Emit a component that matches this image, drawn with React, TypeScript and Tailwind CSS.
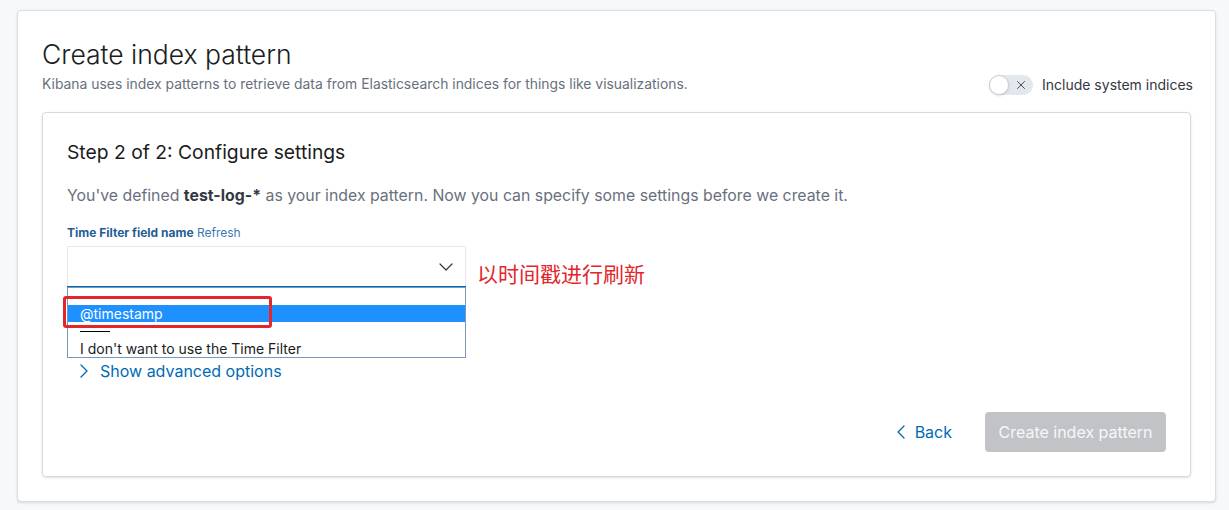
import { ChevronDown, ChevronLeft, ChevronRight, X } from "lucide-react";

const font = { fontFamily: "Inter, 'Noto Sans CJK SC', sans-serif" };

function Toggle() {
  return (
    <div className="flex items-center gap-[9px]">
      <div className="relative w-[44px] h-[20px] rounded-full bg-[#e4e8ee]">
        <div className="absolute left-0 top-0 w-[20px] h-[20px] rounded-full bg-white border border-[#c9ced6] shadow-sm" />
        <X className="absolute right-[5px] top-[3px] w-[14px] h-[14px] text-[#343741]" strokeWidth={1.5} />
      </div>
      <span className="text-[14px] leading-5 text-[#343741]">Include system indices</span>
    </div>
  );
}

function SelectWithList() {
  return (
    <div className="relative w-[399px]">
      <div className="h-[40px] bg-white border border-[#e6e9ef] border-b-0 flex items-center justify-end pr-[7px]">
        <ChevronDown className="w-[24px] h-[24px] text-[#343741]" strokeWidth={1.2} />
      </div>
      <div className="h-[2px] bg-[#006bb4]" />
      {/* native option list */}
      <div className="absolute left-0 top-[41px] w-[399px] bg-white border border-[#7a96b8] text-[14px] text-[#1a1c21] z-10">
        <div className="h-[17px]" />
        <div className="h-[17px] bg-[#1e90ff] text-white pl-[12px] flex items-center">@timestamp</div>
        <div className="h-[18px] pl-[12px] flex items-center">
          <div className="w-[30px] h-px bg-black" />
        </div>
        <div className="h-[17px] pl-[12px] flex items-center">I don't want to use the Time Filter</div>
      </div>
      {/* annotation box */}
      <div className="absolute left-[-4px] top-[50px] w-[209px] h-[32px] border-[3px] border-[#e3262c] rounded-[3px] z-20" />
    </div>
  );
}

export default function App() {
  return (
    <div className="min-h-[510px] bg-[#f7f8fa] pt-[10px] pl-[17px]" style={font}>
      <div className="w-[1199px] h-[492px] bg-white border border-[#d8dde6] rounded-[4px] shadow-sm pt-[25px] px-[24px]">
        <div className="flex justify-between items-end">
          <div>
            <h1 className="text-[26.5px] leading-[36px] font-light text-[#1a1c21]">Create index pattern</h1>
            <p className="mt-[2px] text-[13.9px] leading-5 text-[#69707d]">
              Kibana uses index patterns to retrieve data from Elasticsearch indices for things like visualizations.
            </p>
          </div>
          <div className="mr-[-2px] mb-[-1px]">
            <Toggle />
          </div>
        </div>

        <div className="mt-[18px] w-[1149px] h-[365px] border border-[#d3dae6] rounded-[4px] shadow-sm pt-[25px] px-[24px] flex flex-col">
          <h2 className="text-[19.3px] leading-[28px] font-normal text-[#1a1c21]">Step 2 of 2: Configure settings</h2>
          <p className="mt-[18px] text-[15.85px] leading-6 text-[#69707d]">
            You've defined <span className="font-bold text-[#343741]">test-log-*</span> as your index pattern. Now you can specify some settings before we create it.
          </p>
          <div className="mt-[17px] text-[12px] leading-4">
            <span className="font-bold text-[#1f5d94]">Time Filter field name</span>{" "}
            <span className="text-[#3e78b2]">Refresh</span>
          </div>
          <div className="mt-[5px] flex items-start gap-[11px]">
            <SelectWithList />
            <span className="mt-[12px] text-[21px] leading-[30px] text-[#e3262c]" style={{ fontFamily: "'Noto Sans CJK SC', sans-serif" }}>
              以时间戳进行刷新
            </span>
          </div>
          <div className="mt-[71px] flex items-center text-[16px] leading-6 text-[#006bb4]">
            <ChevronRight className="ml-[5px] w-[24px] h-[24px]" strokeWidth={1.3} />
            <span className="ml-[4px]">Show advanced options</span>
          </div>
          <div className="mt-[29px] flex justify-end items-center">
            <div className="flex items-center text-[16px] text-[#006bb4]">
              <ChevronLeft className="w-[24px] h-[24px]" strokeWidth={1.3} />
              <span className="ml-[2px]">Back</span>
            </div>
            <div className="ml-[33px] w-[181px] h-[40px] rounded-[4px] bg-[#c2c3c6] flex items-center justify-center text-[16px] text-[#f5f7fa]">
              Create index pattern
            </div>
          </div>
        </div>
      </div>
    </div>
  );
}
